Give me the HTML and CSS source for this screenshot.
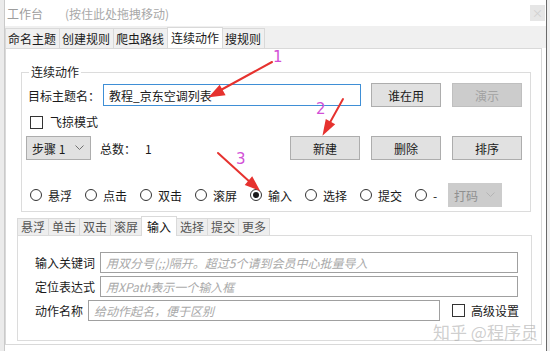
FILE: index.html
```html
<!DOCTYPE html>
<html lang="zh-CN">
<head>
    <meta charset="UTF-8">
    <title>工作台</title>
    <link rel="stylesheet" href="styles.css">
</head>
<body>
    <div class="screen">
        <div class="edge-left"></div>
        <div class="window">
            <div class="titlebar">
                <span class="title">工作台</span>
                <span class="hint">(按住此处拖拽移动)</span>
                <span class="close">×</span>
            </div>

            <div class="tabs">
                <span class="tab">命名主题</span>
                <span class="tab">创建规则</span>
                <span class="tab">爬虫路线</span>
                <span class="tab active">连续动作</span>
                <span class="tab">搜规则</span>
            </div>

            <div class="panel">
                <fieldset class="group">
                    <legend>连续动作</legend>

                    <div class="row row-theme">
                        <span class="field-label">目标主题名：</span>
                        <input class="text-input focused" type="text" value="教程_京东空调列表">
                        <div class="btn-group">
                            <button class="btn">谁在用</button>
                            <button class="btn" disabled>演示</button>
                        </div>
                    </div>

                    <div class="row row-check">
                        <span class="checkbox"></span>
                        <span class="check-label">飞掠模式</span>
                    </div>

                    <div class="row row-steps">
                        <div class="select">
                            <span>步骤 1</span>
                            <svg width="9" height="6" viewBox="0 0 9 6"><polyline points="0.5,0.5 4.5,4.5 8.5,0.5" fill="none" stroke="#707070" stroke-width="1"/></svg>
                        </div>
                        <span class="total">总数：</span>
                        <span class="total-num">1</span>
                        <div class="btn-group">
                            <button class="btn">新建</button>
                            <button class="btn">删除</button>
                            <button class="btn">排序</button>
                        </div>
                    </div>

                    <div class="row row-radios">
                        <label class="radio-item"><span class="radio"></span>悬浮</label>
                        <label class="radio-item"><span class="radio"></span>点击</label>
                        <label class="radio-item"><span class="radio"></span>双击</label>
                        <label class="radio-item"><span class="radio"></span>滚屏</label>
                        <label class="radio-item"><span class="radio checked"></span>输入</label>
                        <label class="radio-item"><span class="radio"></span>选择</label>
                        <label class="radio-item"><span class="radio"></span>提交</label>
                        <label class="radio-item short"><span class="radio"></span>-</label>
                        <div class="select disabled">
                            <span>打码</span>
                            <svg width="9" height="6" viewBox="0 0 9 6"><polyline points="0.5,0.5 4.5,4.5 8.5,0.5" fill="none" stroke="#b4b4b4" stroke-width="1"/></svg>
                        </div>
                    </div>
                </fieldset>

                <div class="subtabs">
                    <span class="subtab">悬浮</span>
                    <span class="subtab">单击</span>
                    <span class="subtab">双击</span>
                    <span class="subtab">滚屏</span>
                    <span class="subtab active">输入</span>
                    <span class="subtab">选择</span>
                    <span class="subtab">提交</span>
                    <span class="subtab">更多</span>
                </div>

                <div class="subpanel">
                    <div class="form-row">
                        <span class="form-label">输入关键词</span>
                        <input class="text-input wide" type="text" placeholder="用双分号(;;)隔开。超过5个请到会员中心批量导入">
                    </div>
                    <div class="form-row">
                        <span class="form-label">定位表达式</span>
                        <input class="text-input wide" type="text" placeholder="用XPath表示一个输入框">
                    </div>
                    <div class="form-row">
                        <span class="form-label">动作名称</span>
                        <input class="text-input narrow" type="text" placeholder="给动作起名，便于区别">
                        <span class="checkbox adv"></span>
                        <span class="check-label">高级设置</span>
                    </div>
                </div>
            </div>
        </div>
        <div class="edge-right"></div>
    </div>

    <div class="watermark">知乎 @程序员</div>

    <!-- hand-drawn annotations on top of the screenshot -->
    <svg class="notes" width="550" height="351" viewBox="0 0 550 351">
        <g stroke="#e6322f" stroke-width="2" stroke-linecap="round" fill="#e6322f">
            <line x1="272" y1="62" x2="219" y2="91"/>
            <polygon points="211,96 224,94.5 219.5,86.5"/>
            <line x1="343" y1="99" x2="328" y2="126"/>
            <polygon points="324,133 333.5,124.5 326.5,120.5"/>
            <line x1="218" y1="153" x2="251" y2="183"/>
            <polygon points="258,189 246.4,184.5 252,178"/>
        </g>
        <g class="note-num" fill="#d24fd6">
            <text x="273" y="62">1</text>
            <text x="316" y="114">2</text>
            <text x="236" y="164">3</text>
        </g>
    </svg>
</body>
</html>
```

FILE: styles.css
```css
* {
    box-sizing: border-box;
}
body {
    margin: 0;
    width: 550px;
    height: 351px;
    overflow: hidden;
    position: relative;
    font-family: "Noto Sans CJK SC", "Microsoft YaHei", sans-serif;
    font-size: 12px;
    color: #1a1a1a;
    background-color: #f0f0f0;
}
.screen {
    display: flex;
    height: 351px;
}
.edge-left {
    width: 5px;
    background-color: #ebebeb;
    border-right: 1px solid #cacaca;
}
.window {
    width: 542px;
    background-color: #fff;
    border-right: 1px solid #6a6a6a;
    display: flex;
    flex-direction: column;
}
.edge-right {
    flex: 1;
    background-color: #efefef;
}

/* title bar */
.titlebar {
    height: 26px;
    display: flex;
    align-items: center;
    padding-left: 2px;
}
.title {
    color: #9d9d9d;
}
.hint {
    margin-left: 22px;
    color: #a8a8a8;
}
.close {
    margin-left: auto;
    margin-right: 1px;
    width: 15px;
    height: 16px;
    background-color: #e6e6e6;
    color: #cfcfcf;
    font-size: 11px;
    line-height: 16px;
    text-align: center;
}

/* main tabs */
.tabs {
    height: 22px;
    background-color: #f0f0f0;
    display: flex;
    align-items: flex-end;
}
.tab {
    height: 20px;
    padding: 0 3px 0 2px;
    line-height: 19px;
    border: 1px solid #d9d9d9;
    border-bottom: none;
    margin-right: -1px;
    background-color: #f0f0f0;
    color: #1a1a1a;
}
.tab.active {
    height: 21px;
    padding: 0 3px;
    background-color: #fff;
    position: relative;
    z-index: 1;
}

.panel {
    flex: 1;
    margin: 0 4px 6px 0;
    border: 1px solid #d9d9d9;
    padding: 15px 0 0 11px;
}

/* fieldset group */
.group {
    margin: 0 0 0 4px;
    width: 510px;
    padding: 0 8px 4px 6px;
    border: 1px solid #dcdcdc;
}
.group legend {
    margin-left: 1px;
    padding: 0 2px;
    line-height: 16px;
    color: #1a1a1a;
}
.row {
    display: flex;
    align-items: center;
}
.row-theme {
    margin-top: 3px;
    height: 24px;
}
.field-label {
    width: 75px;
}
.text-input {
    height: 22px;
    border: 1px solid #a0a0a0;
    padding: 0 5px;
    font-family: inherit;
    font-size: 12px;
    color: #1a1a1a;
    outline: none;
}
.text-input.focused {
    width: 258px;
    border-color: #3f8fd6;
}
.text-input::placeholder {
    color: #a9a9a9;
    font-style: italic;
}
.btn-group {
    margin-left: auto;
    display: flex;
    gap: 11px;
}
.btn {
    width: 70px;
    height: 24px;
    background-color: #e1e1e1;
    border: 1px solid #adadad;
    font-family: inherit;
    font-size: 12px;
    color: #1a1a1a;
    padding: 0;
}
.btn:disabled {
    background-color: #cccccc;
    border-color: #bfbfbf;
    color: #a2a2a2;
}

.row-check {
    margin-top: 5px;
    height: 20px;
}
.checkbox {
    width: 13px;
    height: 13px;
    margin-left: 2px;
    border: 1px solid #333;
    background-color: #fff;
}
.check-label {
    margin-left: 7px;
    line-height: 16px;
}

.row-steps {
    margin-top: 4px;
    height: 24px;
}
.select {
    width: 65px;
    height: 24px;
    margin-left: -2px;
    background-color: #e1e1e1;
    border: 1px solid #adadad;
    display: flex;
    align-items: center;
    justify-content: space-between;
    padding: 0 6px 0 5px;
}
.total {
    margin-left: 9px;
}
.total-num {
    margin-left: 9px;
}

.row-radios {
    margin-top: 23px;
    height: 24px;
}
.radio-item {
    width: 55px;
    display: flex;
    align-items: center;
}
.radio-item:first-child {
    margin-left: 2px;
}
.radio-item.short {
    width: 33px;
}
.radio {
    width: 12px;
    height: 12px;
    margin-right: 6px;
    border: 1px solid #333;
    border-radius: 50%;
    background-color: #fff;
    display: flex;
    align-items: center;
    justify-content: center;
}
.radio.checked::after {
    content: "";
    width: 6px;
    height: 6px;
    border-radius: 50%;
    background-color: #1a1a1a;
}
.select.disabled {
    width: 54px;
    margin-left: 0;
    background-color: #cccccc;
    border-color: #cccccc;
    color: #8f8f8f;
}

/* sub tabs */
.subtabs {
    margin-top: 5px;
    height: 18px;
    display: flex;
    align-items: flex-end;
}
.subtab {
    height: 17px;
    line-height: 16px;
    padding: 0 3px;
    border: 1px solid #dadada;
    border-bottom: none;
    margin-right: -1px;
    background-color: #eeeeee;
    color: #555;
}
.subtab.active {
    height: 20px;
    line-height: 19px;
    padding: 0 5px;
    margin-bottom: -1px;
    background-color: #fff;
    color: #111;
    position: relative;
    z-index: 1;
}
.subpanel {
    width: 515px;
    height: 106px;
    border: 1px solid #dcdcdc;
    padding: 16px 0 0 17px;
    display: flex;
    flex-direction: column;
    gap: 3px;
}
.form-row {
    display: flex;
    align-items: center;
    height: 21px;
}
.form-label {
    margin-right: 5px;
}
.text-input.wide {
    width: 418px;
    height: 21px;
}
.text-input.narrow {
    width: 352px;
    height: 21px;
}
.checkbox.adv {
    margin-left: 12px;
}
.form-row .check-label {
    margin-left: 6px;
    line-height: 15px;
}

.watermark {
    position: absolute;
    left: 433px;
    top: 323px;
    font-size: 17px;
    line-height: 17px;
    color: rgba(165, 165, 165, 0.55);
}
.notes {
    position: absolute;
    top: 0;
    left: 0;
    pointer-events: none;
}
.note-num {
    font-family: "DejaVu Sans", sans-serif;
    font-size: 15px;
}
```
